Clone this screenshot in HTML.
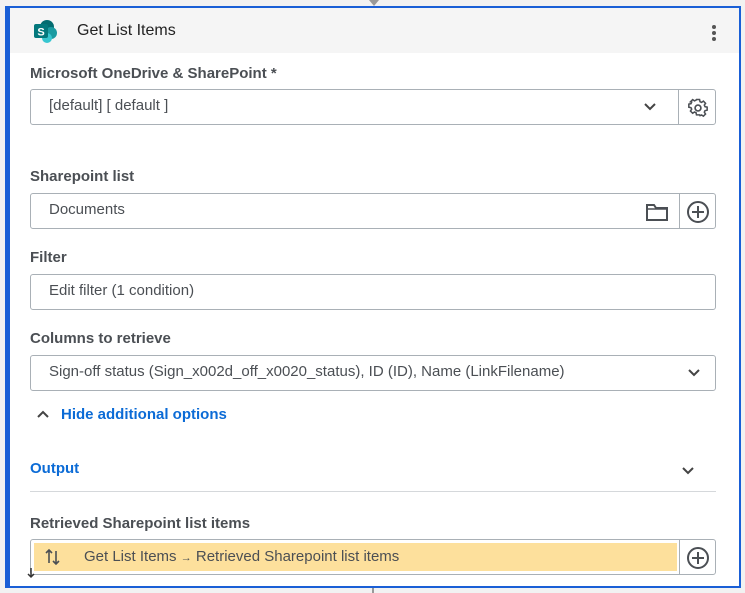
<!DOCTYPE html>
<html><head><meta charset="utf-8"><style>
*{box-sizing:border-box;margin:0;padding:0}
body{width:745px;height:593px;background:#f2f2f2;font-family:"Liberation Sans",sans-serif;position:relative;overflow:hidden}
.card{position:absolute;left:5px;top:6px;width:736px;height:582px;background:#fff;border:2px solid #1a5fd6;border-left-width:5px}
.hdr{position:absolute;left:0;top:0;right:0;height:45px;background:#f5f5f5}
.t{position:absolute;white-space:nowrap}
.lbl{font-size:15px;font-weight:bold;color:#4b4f54}
.in{position:absolute;border:1px solid #a9b0b6;border-radius:3px;background:#fff;font-size:15px;color:#4b4f54}
.in span{position:absolute;left:18px;top:7px;white-space:nowrap}
.btn{position:absolute;border:1px solid #a9b0b6;border-radius:0 3px 3px 0;background:#fff}
.blue{color:#0b6bd6;font-size:15px;font-weight:bold}
</style></head><body>
<div style="position:absolute;left:369px;top:0;width:10px;height:6px;background:#999;clip-path:polygon(0 0,100% 0,50% 100%)"></div>
<div style="position:absolute;left:372px;top:586px;width:2px;height:7px;background:#999"></div>
<div class="card">
<div class="hdr"></div>
<svg class="t" style="left:22px;top:11px" width="28" height="24" viewBox="0 0 28 24">
<circle cx="15" cy="8" r="7" fill="#036c70"/><circle cx="19" cy="14" r="6" fill="#1a9ba1"/><circle cx="15" cy="19" r="5" fill="#37c6d0"/>
<rect x="2" y="5" width="14" height="14" rx="2" fill="#03787c"/>
<text x="9" y="16.5" font-size="11" font-weight="bold" fill="#fff" text-anchor="middle" font-family="Liberation Sans">S</text></svg>
<div class="t" style="left:67px;top:14px;font-size:16px;color:#222">Get List Items</div>
<svg class="t" style="left:701px;top:16px" width="6" height="18"><circle cx="3" cy="3" r="2" fill="#555"/><circle cx="3" cy="9" r="2" fill="#555"/><circle cx="3" cy="15" r="2" fill="#555"/></svg>

<div class="t lbl" style="left:20px;top:57px">Microsoft OneDrive &amp; SharePoint *</div>
<div class="in" style="left:20px;top:81px;width:649px;height:36px;border-radius:3px 0 0 3px"><span>[default] [ default ]</span>
<svg style="position:absolute;left:612px;top:12px" width="14" height="10"><path d="M2 2 L7 7 L12 2" stroke="#444" stroke-width="2" fill="none"/></svg></div>
<div class="btn" style="left:668px;top:81px;width:38px;height:36px">
<svg style="position:absolute;left:9px;top:8px" width="20" height="20" viewBox="0 0 24 24"><path d="M10 2h4l.6 2.8 2 .9 2.4-1.6 2.8 2.8-1.6 2.4.9 2 2.8.6v4l-2.8.6-.9 2 1.6 2.4-2.8 2.8-2.4-1.6-2 .9L14 22h-4l-.6-2.8-2-.9L5 19.9 2.1 17l1.6-2.4-.9-2L0 12v-.1 0-3.9l2.8-.6.9-2L2.1 5 5 2.1l2.4 1.6 2-.9z" fill="none" stroke="#4b4f54" stroke-width="2" transform="translate(1 0) scale(.92)"/><circle cx="12" cy="12" r="3.5" fill="none" stroke="#4b4f54" stroke-width="2"/></svg></div>

<div class="t lbl" style="left:20px;top:160px">Sharepoint list</div>
<div class="in" style="left:20px;top:185px;width:650px;height:36px;border-radius:3px 0 0 3px"><span>Documents</span>
<svg style="position:absolute;left:614px;top:8px" width="24" height="20"><path d="M2 3h7l2 3h11v12H2z" fill="none" stroke="#4b4f54" stroke-width="2"/><path d="M2 7h20" stroke="#4b4f54" stroke-width="1.5"/></svg></div>
<div class="btn" style="left:669px;top:185px;width:37px;height:36px">
<svg style="position:absolute;left:6px;top:6px" width="24" height="24"><circle cx="12" cy="12" r="10" fill="none" stroke="#4b4f54" stroke-width="2"/><path d="M12 6v12M6 12h12" stroke="#4b4f54" stroke-width="2"/></svg></div>

<div class="t lbl" style="left:20px;top:241px">Filter</div>
<div class="in" style="left:20px;top:266px;width:686px;height:36px"><span>Edit filter (1 condition)</span></div>

<div class="t lbl" style="left:20px;top:322px">Columns to retrieve</div>
<div class="in" style="left:20px;top:347px;width:686px;height:36px"><span>Sign-off status (Sign_x002d_off_x0020_status), ID (ID), Name (LinkFilename)</span>
<svg style="position:absolute;left:656px;top:12px" width="14" height="10"><path d="M2 2 L7 7 L12 2" stroke="#444" stroke-width="2" fill="none"/></svg></div>

<svg class="t" style="left:26px;top:401px" width="14" height="10"><path d="M2 8 L7 3 L12 8" stroke="#444" stroke-width="2" fill="none"/></svg>
<div class="t blue" style="left:51px;top:398px">Hide additional options</div>

<div class="t blue" style="left:20px;top:452px">Output</div>
<svg class="t" style="left:671px;top:458px" width="14" height="10"><path d="M2 2 L7 7 L12 2" stroke="#444" stroke-width="2" fill="none"/></svg>
<div style="position:absolute;left:20px;top:483px;width:686px;height:1px;background:#d5d8db"></div>

<div class="t lbl" style="left:20px;top:507px">Retrieved Sharepoint list items</div>
<div class="in" style="left:20px;top:531px;width:650px;height:36px;border-radius:3px 0 0 3px">
<div style="position:absolute;left:3px;top:3px;right:2px;bottom:3px;background:#fde09c"></div>
<svg style="position:absolute;left:14px;top:7px" width="16" height="20"><path d="M4 16V3M1 6l3-3 3 3M11 4v13M8 14l3 3 3-3" stroke="#4b4f54" stroke-width="1.6" fill="none"/></svg>
<span style="left:53px;top:8px;color:#4b4f54">Get List Items <span style="position:static;font-size:11px">→</span> Retrieved Sharepoint list items</span></div>
<div class="btn" style="left:669px;top:531px;width:37px;height:36px">
<svg style="position:absolute;left:6px;top:6px" width="24" height="24"><circle cx="12" cy="12" r="10" fill="none" stroke="#4b4f54" stroke-width="2"/><path d="M12 6v12M6 12h12" stroke="#4b4f54" stroke-width="2"/></svg></div>
<svg class="t" style="left:17px;top:560px" width="8" height="12"><path d="M4 0v9M1 6l3 3 3-3" stroke="#333" stroke-width="1.5" fill="none"/></svg>
</div>
</body></html>
